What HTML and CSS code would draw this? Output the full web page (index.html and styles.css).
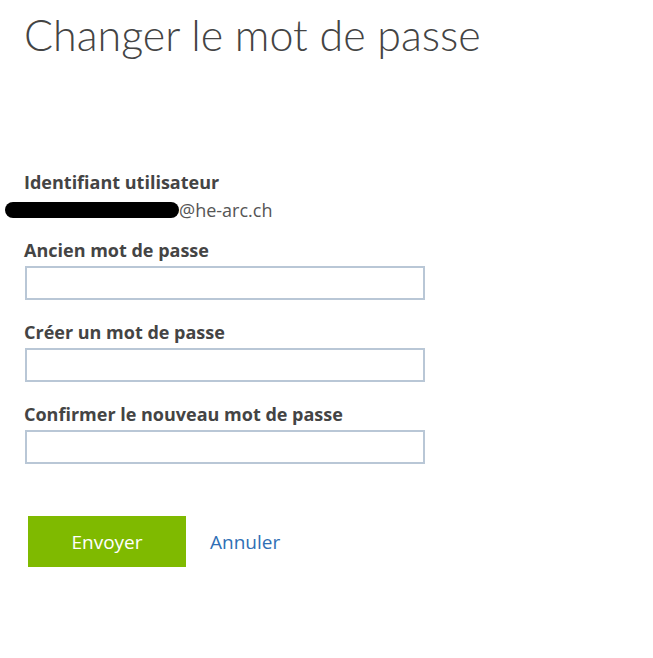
FILE: index.html
```html
<!DOCTYPE html>
<html lang="fr">
<head>
  <meta charset="UTF-8">
  <meta name="viewport" content="width=device-width, initial-scale=1.0">
  <title>Changer le mot de passe</title>
  <link rel="stylesheet" href="styles.css">
</head>
<body>
  <h1 class="titre">Changer le mot de passe</h1>

  <form class="formulaire" onsubmit="return false">
    <div class="champ">
      <div class="label">Identifiant utilisateur</div>
      <div class="identifiant"><span class="masque"></span>@he-arc.ch</div>
    </div>

    <div class="champ">
      <label class="label" for="ancien">Ancien mot de passe</label>
      <input class="saisie" type="password" id="ancien">
    </div>

    <div class="champ">
      <label class="label" for="nouveau">Créer un mot de passe</label>
      <input class="saisie" type="password" id="nouveau">
    </div>

    <div class="champ">
      <label class="label" for="confirme">Confirmer le nouveau mot de passe</label>
      <input class="saisie" type="password" id="confirme">
    </div>

    <div class="actions">
      <button class="envoyer" type="submit">Envoyer</button>
      <a class="annuler" href="#">Annuler</a>
    </div>
  </form>
</body>
</html>
```

FILE: styles.css
```css
body {
  margin: 0;
  padding: 0 0 0 24px;
  font-family: "Open Sans", "DejaVu Sans", sans-serif;
  color: #444;
  background: #fff;
}

.titre {
  font-family: Lato, "Open Sans", sans-serif;
  font-weight: 300;
  font-size: 43px;
  color: #444;
  margin: 5px 0 0 0;
  line-height: 60px;
}

.formulaire {
  margin-top: 106px;
}

.champ {
  margin-bottom: 21px;
}

.label {
  display: block;
  font-weight: 700;
  font-size: 18px;
  line-height: 22px;
  color: #444;
}

.identifiant {
  display: flex;
  align-items: center;
  margin: 6px 0 -3px -19px;
  font-size: 18px;
  color: #555;
  line-height: 22px;
}

.masque {
  display: inline-block;
  width: 174px;
  height: 16px;
  background: #000;
  border-radius: 8px;
}

.saisie {
  display: block;
  box-sizing: border-box;
  width: 400px;
  height: 34px;
  margin: 5px 0 0 1px;
  border: 2px solid #b9c7d6;
  background: #fff;
}

.actions {
  display: flex;
  align-items: center;
  margin-top: 52px;
  padding-left: 4px;
}

.envoyer {
  width: 158px;
  height: 51px;
  border: none;
  background: #7fba00;
  color: #fff;
  font-family: "Open Sans", "DejaVu Sans", sans-serif;
  font-size: 19px;
  cursor: pointer;
}

.annuler {
  margin-left: 24px;
  font-size: 19px;
  color: #2f6fb5;
  text-decoration: none;
}
```
